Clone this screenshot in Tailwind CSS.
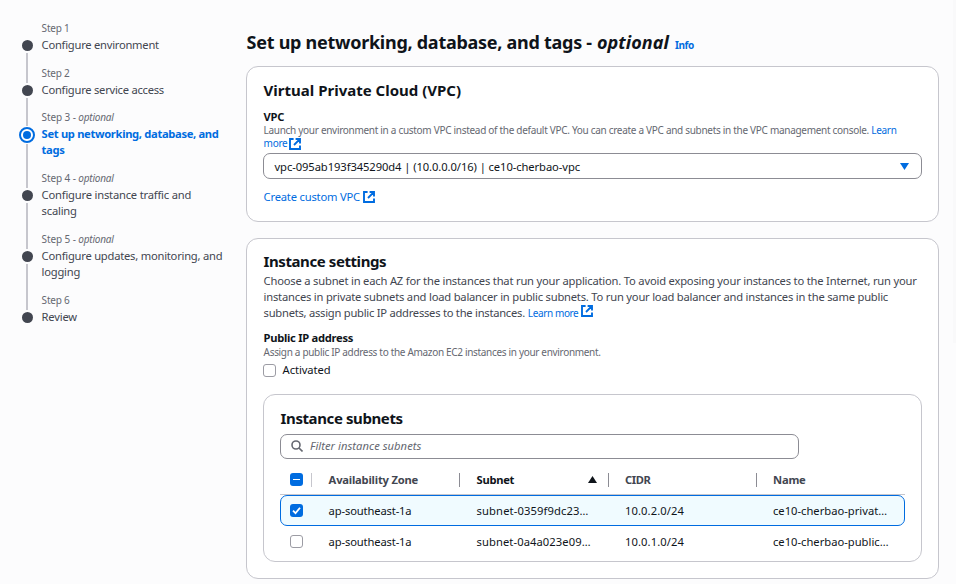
<!DOCTYPE html>
<html lang="en">
<head>
<meta charset="utf-8">
<title>Set up networking, database, and tags</title>
<script src="https://cdn.jsdelivr.net/npm/@tailwindcss/browser@4"></script>
</head>
<body class="flex h-[584px] w-[956px] overflow-hidden bg-[#fcfcfd] font-['Noto_Sans',sans-serif] text-[11.2px] leading-4 text-[#0f141a] whitespace-nowrap">
<svg class="hidden">
  <symbol id="ext" viewBox="0 0 12 12"><path d="M4.6 1H1v10h10V7.4M6.6 1H11v4.4M10.8 1.2 5 7" fill="none" stroke="currentColor" stroke-width="1.9"/></symbol>
</svg>

<nav class="w-[246px] shrink-0 pt-[20px] pl-[19px]">
  <ol class="text-[#424650]">
    <li class="flex h-[45px] gap-[6.6px]">
      <div class="flex w-4 flex-col items-center"><div class="h-[20px]"></div><div class="size-[11px] rounded-full bg-[#424650]"></div><div class="mt-[2px] w-[2px] flex-1 bg-[#c6c6cd]"></div></div>
      <div><div class="text-[10px] tracking-[-0.2px] text-[#656871]">Step 1</div><div class="mt-[1px] tracking-[-0.25px]">Configure environment</div></div>
    </li>
    <li class="flex h-[44px] gap-[6.6px]">
      <div class="flex w-4 flex-col items-center"><div class="mb-[2px] h-[18px] w-[2px] bg-[#c6c6cd]"></div><div class="size-[11px] rounded-full bg-[#424650]"></div><div class="mt-[2px] w-[2px] flex-1 bg-[#c6c6cd]"></div></div>
      <div><div class="text-[10px] tracking-[-0.2px] text-[#656871]">Step 2</div><div class="mt-[1px] tracking-[-0.25px]">Configure service access</div></div>
    </li>
    <li class="flex h-[61px] gap-[6.6px]">
      <div class="flex w-4 flex-col items-center"><div class="mb-[1px] h-[17px] w-[2px] bg-[#c6c6cd]"></div><div class="grid size-4 place-items-center rounded-full border-2 border-[#006ce0] bg-white"><div class="size-2 rounded-full bg-[#006ce0]"></div></div><div class="mt-[1px] w-[2px] flex-1 bg-[#c6c6cd]"></div></div>
      <div><div class="text-[10px] tracking-[-0.1px] text-[#656871]">Step 3 - <i class="tracking-[-0.22px]">optional</i></div><div class="mt-[1px] font-bold tracking-[-0.33px] text-[#006ce0]">Set up networking, database, and<br>tags</div></div>
    </li>
    <li class="flex h-[61px] gap-[6.6px]">
      <div class="flex w-4 flex-col items-center"><div class="mb-[2px] h-[18px] w-[2px] bg-[#c6c6cd]"></div><div class="size-[11px] rounded-full bg-[#424650]"></div><div class="mt-[2px] w-[2px] flex-1 bg-[#c6c6cd]"></div></div>
      <div><div class="text-[10px] tracking-[-0.1px] text-[#656871]">Step 4 - <i class="tracking-[-0.22px]">optional</i></div><div class="mt-[1px] tracking-[-0.2px]">Configure instance traffic and<br>scaling</div></div>
    </li>
    <li class="flex h-[61px] gap-[6.6px]">
      <div class="flex w-4 flex-col items-center"><div class="mb-[2px] h-[18px] w-[2px] bg-[#c6c6cd]"></div><div class="size-[11px] rounded-full bg-[#424650]"></div><div class="mt-[2px] w-[2px] flex-1 bg-[#c6c6cd]"></div></div>
      <div><div class="text-[10px] tracking-[-0.1px] text-[#656871]">Step 5 - <i class="tracking-[-0.22px]">optional</i></div><div class="mt-[1px] tracking-[-0.23px]">Configure updates, monitoring, and<br>logging</div></div>
    </li>
    <li class="flex h-[45px] gap-[6.6px]">
      <div class="flex w-4 flex-col items-center"><div class="mb-[2px] h-[18px] w-[2px] bg-[#c6c6cd]"></div><div class="size-[11px] rounded-full bg-[#424650]"></div></div>
      <div><div class="text-[10px] tracking-[-0.2px] text-[#656871]">Step 6</div><div class="mt-[1px] tracking-[-0.2px]">Review</div></div>
    </li>
  </ol>
</nav>

<main class="w-[693px] shrink-0 pt-[30px]">
  <h1 class="flex h-[36px] items-start pl-[0.6px] text-[18px] leading-6 font-bold"><span class="w-[350.4px] tracking-[-0.27px] whitespace-pre">Set up networking, database, and tags - </span><i class="tracking-[0.07px]">optional</i><a class="ml-[6px] pt-[3px] text-[10px] tracking-[-0.45px] text-[#006ce0]">Info</a></h1>

  <section class="h-[156px] rounded-[12px] border border-[#c6c6cd] bg-white px-4 pt-[13px]">
    <h2 class="pl-[0.6px] text-[15px] leading-5 font-bold">Virtual Private Cloud (VPC)</h2>
    <div class="mt-[10px] pl-[0.6px] leading-[14px] font-bold tracking-[-0.3px]">VPC</div>
    <p class="pl-[0.6px] text-[10px] leading-[13px] tracking-[-0.297px] text-[#656871]">Launch your environment in a custom VPC instead of the default VPC. You can create a VPC and subnets in the VPC management console. <a class="text-[#006ce0]">Learn<br><span class="inline-flex items-center gap-[2px]">more <svg class="size-3"><use href="#ext"/></svg></span></a></p>
    <div class="mt-[3px] flex h-[26px] w-[659px] items-center justify-between rounded-[7px] border border-[#8c8c94] pr-[12px] pl-[10.5px]"><span class="pt-px tracking-[-0.08px]">vpc-095ab193f345290d4 | (10.0.0.0/16) | ce10-cherbao-vpc</span><svg class="h-[7px] w-[9px]" viewBox="0 0 9 7"><path d="M0 0h9L4.5 7z" fill="#006ce0"/></svg></div>
    <a class="mt-[10px] flex items-center gap-[3px] pl-[0.6px] tracking-[-0.2px] text-[#006ce0]">Create custom VPC<svg class="size-3"><use href="#ext"/></svg></a>
  </section>

  <section class="mt-4 h-[341px] rounded-[12px] border border-[#c6c6cd] bg-white px-4 pt-[12px]">
    <h2 class="pl-[0.6px] text-[15px] leading-5 font-bold tracking-[-0.42px]">Instance settings</h2>
    <p class="mt-[2px] pl-[0.6px] text-[#424650]"><span class="tracking-[-0.2px]">Choose a subnet in each AZ for the instances that run your application. To avoid exposing your instances to the Internet, run your</span><br><span class="tracking-[-0.21px]">instances in private subnets and load balancer in public subnets. To run your load balancer and instances in the same public</span><br><span class="tracking-[-0.255px]">subnets, assign public IP addresses to the instances.</span> <a class="inline-flex gap-[3px] text-[10px] tracking-[-0.38px] text-[#006ce0]">Learn more<svg class="size-3"><use href="#ext"/></svg></a></p>
    <div class="mt-[10px] pl-[0.6px] leading-[14px] font-bold tracking-[-0.29px]">Public IP address</div>
    <p class="pl-[0.6px] text-[10px] leading-[14px] tracking-[-0.321px] text-[#656871]">Assign a public IP address to the Amazon EC2 instances in your environment.</p>
    <label class="mt-[3px] flex items-center gap-[6.6px] tracking-[-0.08px]"><span class="size-[13px] rounded-[3px] border border-[#9c9ca4] bg-white"></span>Activated</label>

    <section class="mt-4 h-[168px] w-[659px] rounded-[12px] border border-[#c6c6cd] px-4 pt-[13px]">
      <h3 class="pl-[0.6px] text-[15px] leading-5 font-bold tracking-[-0.4px]">Instance subnets</h3>
      <div class="mt-[6px] flex h-[25px] w-[519px] items-center gap-[7px] rounded-[7px] border border-[#8c8c94] pb-px pl-[10px] text-[#656871]"><svg class="size-3" viewBox="0 0 12 12" fill="none" stroke="currentColor" stroke-width="1.6"><circle cx="5" cy="5" r="4"/><path d="m8 8 3.5 3.5"/></svg><i class="tracking-[0.04px]">Filter instance subnets</i></div>
      <div class="grid h-[36px] w-[625px] grid-cols-[32px_148px_149px_148px_148px] items-center border-b border-[#c6c6cd] pt-[6px] font-bold text-[#424650]">
        <div class="flex h-[14px] items-center border-r border-[#c6c6cd] pl-[10px]"><span class="grid size-[13px] place-items-center rounded-[3px] bg-[#006ce0]"><span class="h-[1.5px] w-[7px] bg-white"></span></span></div>
        <div class="flex h-[14px] items-center border-r border-[#8c8c94] pl-[16.6px] tracking-[-0.2px]">Availability Zone</div>
        <div class="flex h-[14px] items-center justify-between border-r border-[#8c8c94] pr-[11px] pl-[16.6px] tracking-[-0.3px] text-[#0f141a]">Subnet<svg class="h-[7px] w-[9px]" viewBox="0 0 9 7"><path d="M0 7h9L4.5 0z" fill="#0f141a"/></svg></div>
        <div class="flex h-[14px] items-center border-r border-[#8c8c94] pl-[16px] tracking-[-0.4px]">CIDR</div>
        <div class="pl-[16px] tracking-[-0.2px]">Name</div>
      </div>
      <div class="grid h-[31px] w-[625px] grid-cols-[31px_148px_149px_148px_147px] items-center rounded-[7px] border border-[#006ce0] bg-[#f0fbff]">
        <div class="pl-[9px]"><span class="block size-[13px] rounded-[3px] bg-[#006ce0]"><svg class="size-[13px]" viewBox="0 0 13 13"><path d="m3 6.7 2.5 2.5L10 3.7" fill="none" stroke="#fff" stroke-width="1.8"/></svg></span></div>
        <div class="pl-[16.6px] tracking-[-0.14px]">ap-southeast-1a</div>
        <div class="pl-[16.6px] tracking-[0.12px]">subnet-0359f9dc23…</div>
        <div class="pl-[16px] tracking-[0.09px]">10.0.2.0/24</div>
        <div class="pl-[16px]">ce10-cherbao-privat…</div>
      </div>
      <div class="grid h-[31px] w-[625px] grid-cols-[32px_148px_149px_148px_148px] items-center">
        <div class="pl-[10px]"><span class="block size-[13px] rounded-[3px] border border-[#9c9ca4] bg-white"></span></div>
        <div class="pl-[16.6px] tracking-[-0.14px]">ap-southeast-1a</div>
        <div class="pl-[16.6px] tracking-[0.08px]">subnet-0a4a023e09…</div>
        <div class="pl-[16px] tracking-[0.09px]">10.0.1.0/24</div>
        <div class="pl-[16px]">ce10-cherbao-public…</div>
      </div>
    </section>
  </section>
</main>
<div class="ml-auto h-[343px] w-[3px] bg-[#f9f9fa]"></div>
</body>
</html>
